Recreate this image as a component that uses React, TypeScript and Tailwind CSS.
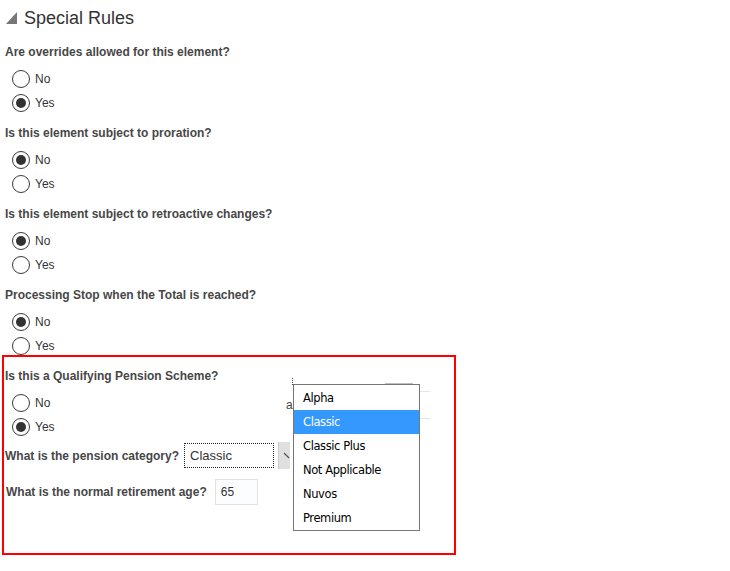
import React from "react";

function Radio({ label, checked }: { label: string; checked?: boolean }) {
  return (
    <div className="flex items-center h-[24px]">
      <div className="ml-[7px] w-[18px] h-[18px] rounded-full border border-[#3a3a3a] bg-white flex items-center justify-center">
        {checked && <div className="w-[10px] h-[10px] rounded-full bg-[#333]" />}
      </div>
      <span className="ml-[5px] text-[12px] text-[#333] leading-[16px]">{label}</span>
    </div>
  );
}

function Question({ q, yes, first }: { q: string; yes: boolean; first?: boolean }) {
  return (
    <div className={first ? "mt-[9px]" : "mt-[10px]"}>
      <div className="h-[16px] leading-[16px] text-[12px] font-bold text-[#474747]">{q}</div>
      <div className="mt-[7px]">
        <Radio label="No" checked={!yes} />
        <Radio label="Yes" checked={yes} />
      </div>
    </div>
  );
}

export default function App() {
  const items = ["Alpha", "Classic", "Classic Plus", "Not Applicable", "Nuvos", "Premium"];
  return (
    <div className="w-[730px] h-[571px] bg-white overflow-hidden pl-[5px] pt-[1px] font-['Liberation_Sans',Arial,sans-serif]">
      <div className="flex items-center h-[34px]">
        <svg width="11" height="12" viewBox="0 0 11 12" className="ml-[1px]">
          <polygon points="0,12 11,0 11,12" fill="#777" />
        </svg>
        <span className="ml-[7px] text-[18px] leading-[34px] text-[#333]">Special Rules</span>
      </div>

      <Question first q="Are overrides allowed for this element?" yes={true} />
      <Question q="Is this element subject to proration?" yes={false} />
      <Question q="Is this element subject to retroactive changes?" yes={false} />
      <Question q="Processing Stop when the Total is reached?" yes={false} />

      <div className="relative -mt-[3px] ml-[-3px] w-[454px] border-2 border-[#ff0000] pl-[1px] pt-[11px] pb-[48px]">
        <div className="h-[16px] leading-[16px] text-[12px] font-bold text-[#474747]">Is this a Qualifying Pension Scheme?</div>
        <div className="mt-[7px]">
          <Radio label="No" />
          <Radio label="Yes" checked />
        </div>

        <div className="mt-[3px] flex items-center h-[27px]">
          <span className="text-[12px] font-bold text-[#474747] leading-[16px]">What is the pension category?</span>
          <div className="ml-[5px] w-[90px] h-[25px] border border-dotted border-[#222] bg-white flex items-center pl-[5px]">
            <span className="text-[13px] text-[#333]">Classic</span>
          </div>
          <div className="ml-[4px] w-[12px] h-[27px] bg-[#e0e0e0] border-l border-[#c8c8c8]">
            <svg width="12" height="27" viewBox="0 0 12 27">
              <line x1="5" y1="11" x2="10" y2="16" stroke="#555" strokeWidth="1.2" />
            </svg>
          </div>
        </div>

        <div className="mt-[10px] flex items-center h-[26px]">
          <span className="ml-[1px] text-[12px] font-bold text-[#474747] leading-[16px]">What is the normal retirement age?</span>
          <div className="ml-[8px] w-[43px] h-[26px] border border-[#e2e2e2] bg-[#fcfdff] flex items-center pl-[5px]">
            <span className="text-[12px] text-[#333]">65</span>
          </div>
        </div>

        {/* partially hidden elements behind the dropdown */}
        <div className="absolute left-[288px] top-[21px] w-[1px] h-[7px] border-l border-dotted border-[#444]" />
        <div className="absolute left-[381px] top-[26px] w-[28px] h-[3px] bg-[#bdbdbd]" />
        <div className="absolute left-[414px] top-[34px] w-[12px] h-[1px] bg-[#e4e4e4]" />
        <div className="absolute left-[414px] top-[61px] w-[12px] h-[1px] bg-[#e4e4e4]" />
        <span className="absolute left-[282px] top-[40px] text-[12px] text-[#444] leading-[16px]">a</span>

        <div className="absolute left-[289px] top-[27px] w-[127px] border border-[#767676] bg-white pt-[1px] pb-0 z-10 font-['DejaVu_Sans',Tahoma,sans-serif]">
          {items.map((it) => (
            <div
              key={it}
              className={
                "h-[24px] flex items-center pl-[9px] pt-[1px] text-[11.5px] tracking-[-0.4px] " +
                (it === "Classic" ? "bg-[#3399ff] text-white" : "text-black")
              }
            >
              {it}
            </div>
          ))}
        </div>
      </div>
    </div>
  );
}
